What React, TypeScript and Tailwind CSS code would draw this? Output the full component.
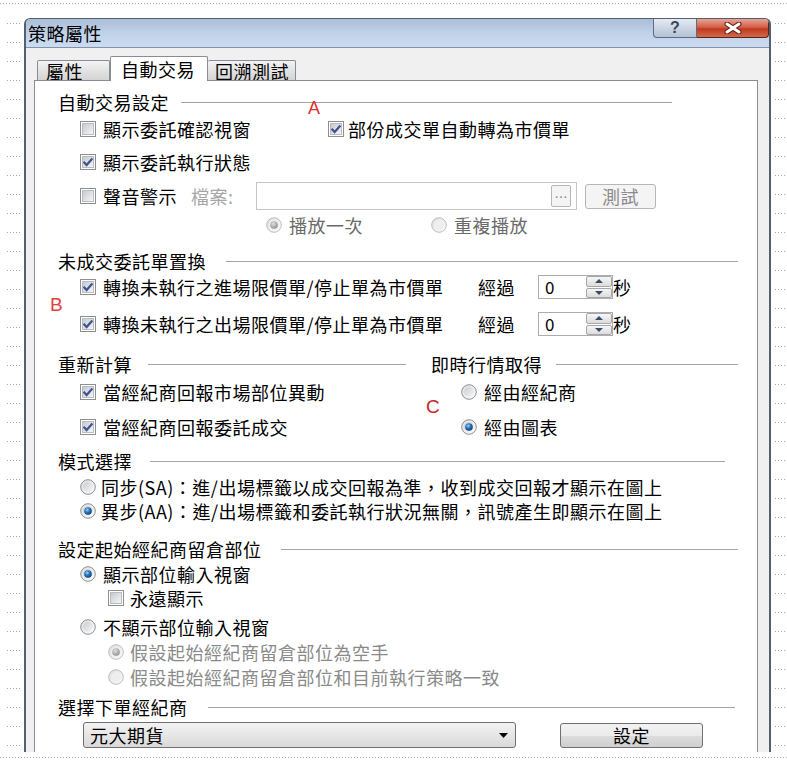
import React from 'react';

// dotted guide line like the document grid around the screenshot
const DOTS = 'h-px bg-[image:linear-gradient(to_right,#a8a8a8_1px,transparent_1px)] bg-[length:3px_1px]';

function DotLine() {
  return <div className={`w-full shrink-0 ${DOTS}`} />;
}

function MarginDots({ side }: { side: 'left' | 'right' }) {
  const left = side === 'left';
  return (
    <div className={left ? 'w-[24px] shrink-0 pt-[5px] flex flex-col' : 'w-[16px] shrink-0 pt-[5px] flex flex-col'}>
      {Array.from({ length: 39 }, (_, i) => (
        <div key={i} className="h-[19px] shrink-0">
          <div className={left ? `ml-[7px] w-[15px] ${DOTS}` : `ml-[4px] w-[12px] ${DOTS}`} />
        </div>
      ))}
    </div>
  );
}

function Defs() {
  return (
    <svg width="0" height="0" className="block">
      <defs>
        <linearGradient id="rOuter" x1="0" y1="0" x2="1" y2="1">
          <stop offset="0" stopColor="#dcdcdc" />
          <stop offset="1" stopColor="#ffffff" />
        </linearGradient>
        <linearGradient id="rInner" x1="0" y1="0" x2="1" y2="1">
          <stop offset="0" stopColor="#c9ccd1" />
          <stop offset="1" stopColor="#f7f7f7" />
        </linearGradient>
        <radialGradient id="rDot" cx="0.4" cy="0.35" r="0.7">
          <stop offset="0" stopColor="#9fd6fb" />
          <stop offset="0.45" stopColor="#2a74bd" />
          <stop offset="1" stopColor="#0b3a6e" />
        </radialGradient>
        <radialGradient id="rDotDis" cx="0.4" cy="0.35" r="0.7">
          <stop offset="0" stopColor="#e0e0e0" />
          <stop offset="1" stopColor="#8c8c8c" />
        </radialGradient>
        <linearGradient id="cbInner" x1="0" y1="0" x2="1" y2="1">
          <stop offset="0" stopColor="#c3c7cd" />
          <stop offset="1" stopColor="#f8f8f8" />
        </linearGradient>
      </defs>
    </svg>
  );
}

function Check({ checked = false }: { checked?: boolean }) {
  return (
    <svg width="16" height="16" viewBox="0 0 16 16" className="shrink-0">
      <rect x="0.5" y="0.5" width="15" height="15" fill="#ffffff" stroke="#8e8f8f" />
      <rect x="2.5" y="2.5" width="11" height="11" fill="url(#cbInner)" stroke="#b9bdc3" />
      {checked && <path d="M3.6 7.8 L6.6 11 L12.4 4.4" fill="none" stroke="#3f5390" strokeWidth="2.2" />}
    </svg>
  );
}

function Radio({ checked = false, disabled = false }: { checked?: boolean; disabled?: boolean }) {
  return (
    <svg width="16" height="16" viewBox="0 0 16 16" className="shrink-0">
      <circle cx="8" cy="8" r="7.3" fill="url(#rOuter)" stroke={disabled ? '#bcbcbc' : '#8e8f8f'} />
      <circle cx="8" cy="8" r="5" fill={disabled ? '#eeeeee' : 'url(#rInner)'} />
      {checked && <circle cx="8" cy="8" r="3.8" fill={disabled ? 'url(#rDotDis)' : 'url(#rDot)'} />}
    </svg>
  );
}

function Header({ label, line }: { label: string; line: string }) {
  return (
    <div className="flex items-center h-[22px] pl-[23px]">
      <span className="whitespace-nowrap">{label}</span>
      <div className={`flex-1 h-px bg-[#a3a3a3] ${line}`} />
    </div>
  );
}

function Spin() {
  return (
    <div className="w-[75px] h-[24px] flex items-center border border-[#abadb3] bg-white">
      <span className="flex-1 pl-[6px] text-[17px]">0</span>
      <div className="w-[26px] h-[22px] flex flex-col gap-px">
        <div className="flex-1 flex items-center justify-center rounded-[2px] border border-[#a7a7a7] bg-linear-to-b from-[#f6f6f6] to-[#dcdcdc]">
          <svg width="8" height="4" viewBox="0 0 8 4"><path d="M0 4 L4 0 L8 4 Z" fill="#3d4a66" /></svg>
        </div>
        <div className="flex-1 flex items-center justify-center rounded-[2px] border border-[#a7a7a7] bg-linear-to-b from-[#f6f6f6] to-[#dcdcdc]">
          <svg width="8" height="4" viewBox="0 0 8 4"><path d="M0 0 L8 0 L4 4 Z" fill="#3d4a66" /></svg>
        </div>
      </div>
    </div>
  );
}

function TitleBar() {
  return (
    <div className="h-[29px] shrink-0 flex items-start border-b border-[#8193ab] bg-linear-to-b from-[#aabdd5] via-[#bfd2e8] to-[#cbdcf1]">
      <div className="h-[28px] pl-[2px] flex items-center text-[18px] text-black">策略屬性</div>
      <div className="ml-auto flex">
        <div className="w-[44px] h-[19px] flex items-center justify-center rounded-bl-[4px] border border-t-0 border-[#5a6d84] bg-linear-to-b from-[#e4eaf2] to-[#b3c2d4]">
          <span className="text-[16px] font-bold leading-none tracking-normal text-[#3b4758] font-['Liberation_Sans',sans-serif]">?</span>
        </div>
        <div className="w-[72px] h-[19px] flex items-center justify-center rounded-br-[4px] border border-l-0 border-t-0 border-[#5c2217] bg-[linear-gradient(to_bottom,#e9a393_0%,#d4604a_45%,#c2391f_55%,#d06a4c_100%)]">
          <svg width="20" height="12" viewBox="0 0 20 12">
            <path d="M4 2 L16 10 M16 2 L4 10" stroke="#5a1e12" strokeWidth="5" strokeLinecap="round" />
            <path d="M4 2 L16 10 M16 2 L4 10" stroke="#ffffff" strokeWidth="3" strokeLinecap="round" />
          </svg>
        </div>
      </div>
    </div>
  );
}

function Tabs() {
  return (
    <div className="flex items-end h-[24px] ml-[3px] shrink-0">
      <div className="w-[73px] h-[20px] flex items-center pl-[8px] border border-b-0 border-[#898c95] rounded-t-[2px] bg-linear-to-b from-[#f3f3f3] via-[#e3e3e3] to-[#d4d4d4]">
        屬性
      </div>
      <div className="relative z-10 w-[98px] h-[25px] -mb-px flex items-center pl-[10px] border border-b-0 border-[#898c95] rounded-t-[2px] bg-white">
        自動交易
      </div>
      <div className="w-[88px] h-[20px] flex items-center pl-[7px] border border-l-0 border-b-0 border-[#898c95] rounded-t-[2px] bg-linear-to-b from-[#f3f3f3] via-[#e3e3e3] to-[#d4d4d4]">
        回溯測試
      </div>
    </div>
  );
}

function Panel() {
  return (
    <div className="relative flex-1 flex flex-col bg-white border border-b-0 border-[#898c95]">
      {/* 自動交易設定 */}
      <div className="mt-[10px]">
        <Header label="自動交易設定" line="ml-[12px] mr-[85px]" />
      </div>
      <div className="flex items-center h-[22px] mt-[5px] pl-[45px]">
        <div className="w-[248px] flex items-center">
          <Check />
          <span className="ml-[7px]">顯示委託確認視窗</span>
        </div>
        <Check checked />
        <span className="ml-[4px]">部份成交單自動轉為市價單</span>
      </div>
      <div className="flex items-center h-[22px] mt-[11px] pl-[45px]">
        <Check checked />
        <span className="ml-[7px]">顯示委託執行狀態</span>
      </div>
      <div className="flex items-center h-[28px] mt-[9px] pl-[45px]">
        <Check />
        <span className="ml-[7px] w-[88px]">聲音警示</span>
        <span className="w-[65px] text-[#a6a6a6]">檔案:</span>
        <div className="w-[321px] h-[28px] flex items-center justify-end pr-[5px] border border-[#c2c4c8] bg-white">
          <div className="w-[20px] h-[22px] flex items-center justify-center rounded-[2px] border border-[#b4b7ba] bg-[#f4f4f4] text-[13px] leading-none tracking-normal text-[#8a8a8a]">
            …
          </div>
        </div>
        <div className="ml-[8px] w-[71px] h-[25px] flex items-center justify-center rounded-[3px] border border-[#b4b7ba] bg-[#f4f4f4] text-[#8a8a8a]">
          測試
        </div>
      </div>
      <div className="flex items-center h-[22px] mt-[4px] pl-[231px] text-[#6a6a6a]">
        <div className="w-[165px] flex items-center">
          <Radio checked disabled />
          <span className="ml-[7px]">播放一次</span>
        </div>
        <Radio disabled />
        <span className="ml-[7px]">重複播放</span>
      </div>

      {/* 未成交委託單置換 */}
      <div className="mt-[14px]">
        <Header label="未成交委託單置換" line="ml-[20px] mr-[19px]" />
      </div>
      {[4, 15].map((mt, i) => (
        <div key={i} className={mt === 4 ? 'flex items-center h-[22px] mt-[4px] pl-[45px]' : 'flex items-center h-[22px] mt-[15px] pl-[45px]'}>
          <Check checked />
          <span className="ml-[7px] w-[375px] whitespace-nowrap">
            {i === 0 ? '轉換未執行之進場限價單/停止單為市價單' : '轉換未執行之出場限價單/停止單為市價單'}
          </span>
          <span className="w-[60px]">經過</span>
          <Spin />
          <span>秒</span>
        </div>
      ))}

      {/* 重新計算 / 即時行情取得 */}
      <div className="flex mt-[18px]">
        <div className="w-[396px] flex flex-col">
          <Header label="重新計算" line="ml-[16px] mr-[25px]" />
          <div className="flex items-center h-[22px] mt-[6px] pl-[45px]">
            <Check checked />
            <span className="ml-[7px]">當經紀商回報市場部位異動</span>
          </div>
          <div className="flex items-center h-[22px] mt-[13px] pl-[45px]">
            <Check checked />
            <span className="ml-[7px]">當經紀商回報委託成交</span>
          </div>
        </div>
        <div className="flex-1 flex flex-col">
          <div className="flex items-center h-[22px]">
            <span>即時行情取得</span>
            <div className="flex-1 h-px bg-[#a3a3a3] ml-[14px] mr-[19px]" />
          </div>
          <div className="flex items-center h-[22px] mt-[6px] pl-[30px]">
            <Radio />
            <span className="ml-[7px]">經由經紀商</span>
          </div>
          <div className="flex items-center h-[22px] mt-[13px] pl-[30px]">
            <Radio checked />
            <span className="ml-[7px]">經由圖表</span>
          </div>
        </div>
      </div>

      {/* 模式選擇 */}
      <div className="mt-[12px]">
        <Header label="模式選擇" line="ml-[18px] mr-[32px]" />
      </div>
      <div className="flex items-center h-[22px] mt-[4px] pl-[45px] whitespace-nowrap">
        <Radio />
        <span className="ml-[5px]">同步(SA)：進/出場標籤以成交回報為準，收到成交回報才顯示在圖上</span>
      </div>
      <div className="flex items-center h-[22px] mt-[2px] pl-[45px] whitespace-nowrap">
        <Radio checked />
        <span className="ml-[5px]">異步(AA)：進/出場標籤和委託執行狀況無關，訊號產生即顯示在圖上</span>
      </div>

      {/* 設定起始經紀商留倉部位 */}
      <div className="mt-[16px]">
        <Header label="設定起始經紀商留倉部位" line="ml-[19px] mr-[19px]" />
      </div>
      <div className="flex items-center h-[22px] mt-[3px] pl-[45px] leading-[20px]">
        <Radio checked />
        <span className="ml-[7px]">顯示部位輸入視窗</span>
      </div>
      <div className="flex items-center h-[22px] mt-[2px] pl-[73px] leading-[20px]">
        <Check />
        <span className="ml-[6px]">永遠顯示</span>
      </div>
      <div className="flex items-center h-[22px] mt-[7px] pl-[45px] leading-[20px]">
        <Radio />
        <span className="ml-[7px]">不顯示部位輸入視窗</span>
      </div>
      <div className="flex items-center h-[22px] mt-[3px] pl-[73px] leading-[20px] text-[#8a8a8a]">
        <Radio checked disabled />
        <span className="ml-[6px]">假設起始經紀商留倉部位為空手</span>
      </div>
      <div className="flex items-center h-[22px] mt-[3px] pl-[73px] leading-[20px] text-[#8a8a8a]">
        <Radio disabled />
        <span className="ml-[6px]">假設起始經紀商留倉部位和目前執行策略一致</span>
      </div>

      {/* 選擇下單經紀商 */}
      <div className="mt-[8px]">
        <Header label="選擇下單經紀商" line="ml-[20px] mr-[22px]" />
      </div>
      <div className="flex items-center h-[28px] mt-[3px] pl-[48px]">
        <div className="w-[433px] h-[26px] flex items-center pl-[6px] pr-[7px] rounded-[3px] border border-[#707070] bg-linear-to-b from-[#f3f3f3] via-[#e6e6e6] to-[#d9d9d9]">
          <span className="flex-1">元大期貨</span>
          <svg width="9" height="5" viewBox="0 0 9 5"><path d="M0 0 L9 0 L4.5 5 Z" fill="#000" /></svg>
        </div>
        <div className="ml-[44px] w-[143px] h-[25px] flex items-center justify-center rounded-[3px] border border-[#707070] bg-[linear-gradient(to_bottom,#f2f2f2,#ebebeb_50%,#dddddd_51%,#cfcfcf)]">
          設定
        </div>
      </div>

      {/* red annotations */}
      <span className="absolute left-[273px] top-[18px] text-[18px] leading-[18px] text-[#e0302a] font-['Liberation_Sans',sans-serif]">A</span>
      <span className="absolute left-[15px] top-[215px] text-[19px] leading-[18px] text-[#e0403a] font-['Liberation_Sans',sans-serif]">B</span>
      <span className="absolute left-[391px] top-[317px] text-[19px] leading-[18px] text-[#c0282a] font-['Liberation_Sans',sans-serif]">C</span>
    </div>
  );
}

export default function App() {
  return (
    <div className="w-[787px] h-[768px] bg-white overflow-hidden flex flex-col text-black text-[18px] leading-[22px] tracking-[0.5px] font-['Noto_Sans_CJK_TC','Noto_Sans',sans-serif]">
      <Defs />
      <div className="h-[3px] shrink-0" />
      <DotLine />
      <div className="h-[14px] shrink-0" />
      <div className="flex h-[734px] shrink-0 overflow-hidden">
        <MarginDots side="left" />
        <div className="w-[747px] h-[734px] shrink-0 flex flex-col rounded-t-[6px] border-x-2 border-t border-[#52606f] overflow-hidden bg-[#f0f0f0]">
          <TitleBar />
          <div className="flex-1 flex flex-col pt-[8px] pl-[8px] pr-[11px]">
            <Tabs />
            <Panel />
          </div>
        </div>
        <MarginDots side="right" />
      </div>
      <div className="h-[5px] shrink-0" />
      <DotLine />
    </div>
  );
}
